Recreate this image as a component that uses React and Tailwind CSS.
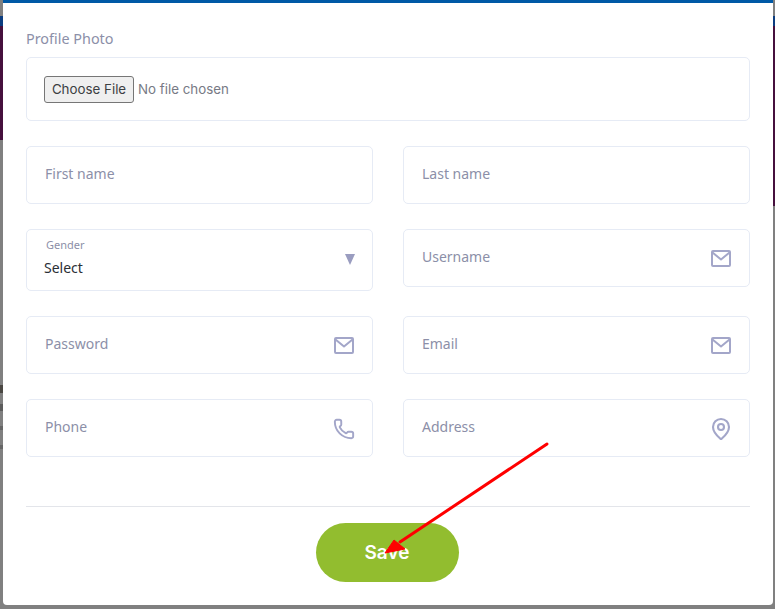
import { Phone, MapPin } from 'lucide-react';

const font = { fontFamily: '"Noto Sans", sans-serif' };

const MailIcon = ({ className }) => (
  <svg className={className} viewBox="0 0 22 22" fill="none" stroke="currentColor" strokeWidth="2" strokeLinejoin="round">
    <rect x="2" y="4" width="18" height="15" rx="1" />
    <path d="M2.5 5.5 11 12.5l8.5-7" />
  </svg>
);

const Field = ({ label, icon: Icon, iconClass }) => (
  <div className="flex h-[58px] items-start justify-between rounded-[5px] border border-[#e6ebf5] bg-white pl-[18px] pr-[17px]">
    <span className="mt-[17px] text-[14px] leading-[20px] text-[#8c8fa8]">{label}</span>
    {Icon && <Icon className={iconClass} strokeWidth={2.1} />}
  </div>
);

const mail = 'mt-[17px] h-[22px] w-[22px] text-[#a3a6c9]';

export default function App() {
  return (
    <div className="relative h-[609px] w-[775px] overflow-hidden bg-[#808080]" style={font}>
      {/* dimmed page behind the modal */}
      <div className="mt-[16px] h-[10px] bg-[#0b3d80]" />
      <div className="flex h-[180px] justify-between">
        <div className="h-[114px] w-[3px] bg-[#46103d]" />
        <div className="h-[180px] w-[3px] bg-[#46103d]" />
      </div>
      {/* clipped page text showing at the left edge */}
      <div className="mt-[179px] flex w-[3px] flex-col">
        <span className="h-[8px] bg-[#4a4742]" />
        <span className="mt-[11px] h-[7px] bg-[#5c5c5c]" />
        <span className="mt-[15px] h-[4px] bg-[#666666]" />
        <span className="mt-[15px] h-[4px] bg-[#666666]" />
      </div>

      <div className="absolute left-[3px] top-0 h-[605px] w-[770px] rounded-b-[4px] border-t-[3px] border-[#0059a6] bg-white px-[23px]">
        <p className="mt-[26px] text-[14.4px] leading-[20px] text-[#8c8fa8]">Profile Photo</p>
        <div className="mt-[8px] flex h-[64px] items-center rounded-[5px] border border-[#e6ebf5] pl-[17px]">
          <button className="h-[27px] w-[90px] rounded-[3px] border border-[#767676] bg-[#efefef] pt-[1px] text-[13.33px] leading-none text-[#3c4043]" style={{ fontFamily: 'Inter, sans-serif' }}>
            Choose File
          </button>
          <span className="ml-[4px] mt-[1px] text-[13.33px] text-[#777a85]" style={{ fontFamily: 'Inter, sans-serif' }}>No file chosen</span>
        </div>

        <div className="mt-[25px] grid grid-cols-2 items-start gap-x-[30px] gap-y-[25px]">
          <Field label="First name" />
          <Field label="Last name" />
          <div className="relative h-[62px] rounded-[5px] border border-[#e6ebf5] pl-[17px]">
            <p className="ml-[2px] mt-[7px] text-[11px] leading-[16px] text-[#8c8fa8]">Gender</p>
            <p className="mt-[5px] text-[14px] leading-[20px] text-[#2b2f36]">Select</p>
            <span className="absolute right-[17px] top-[24px] h-0 w-0 border-x-[5px] border-t-[11px] border-x-transparent border-t-[#9a9dc0]" />
          </div>
          <Field label="Username" icon={MailIcon} iconClass={mail} />
          <Field label="Password" icon={MailIcon} iconClass={mail} />
          <Field label="Email" icon={MailIcon} iconClass={mail} />
          <Field label="Phone" icon={Phone} iconClass="mt-[18px] h-[22px] w-[22px] text-[#a3a6c9]" />
          <Field label="Address" icon={MapPin} iconClass="-mr-[1px] mt-[17px] h-[24px] w-[24px] text-[#a3a6c9]" />
        </div>

        <div className="mt-[49px] border-t border-[#e3e5ea]" />
        <div className="mt-[16px] flex justify-center pr-[2px]">
          <button className="h-[59px] w-[143px] rounded-full bg-[#92bd2f] pt-[1px] text-[19px] font-semibold text-white" style={{ fontFamily: 'Inter, sans-serif' }}>
            Save
          </button>
        </div>
      </div>

      {/* annotation arrow drawn over the screenshot */}
      <svg className="absolute left-0 top-0" width="775" height="609">
        <line x1="547" y1="444" x2="400" y2="542" stroke="#ff0000" strokeWidth="3" strokeLinecap="round" />
        <polygon points="385,553 394,540 405,549" fill="#ff0000" stroke="#ff0000" strokeWidth="1" />
      </svg>
    </div>
  );
}
